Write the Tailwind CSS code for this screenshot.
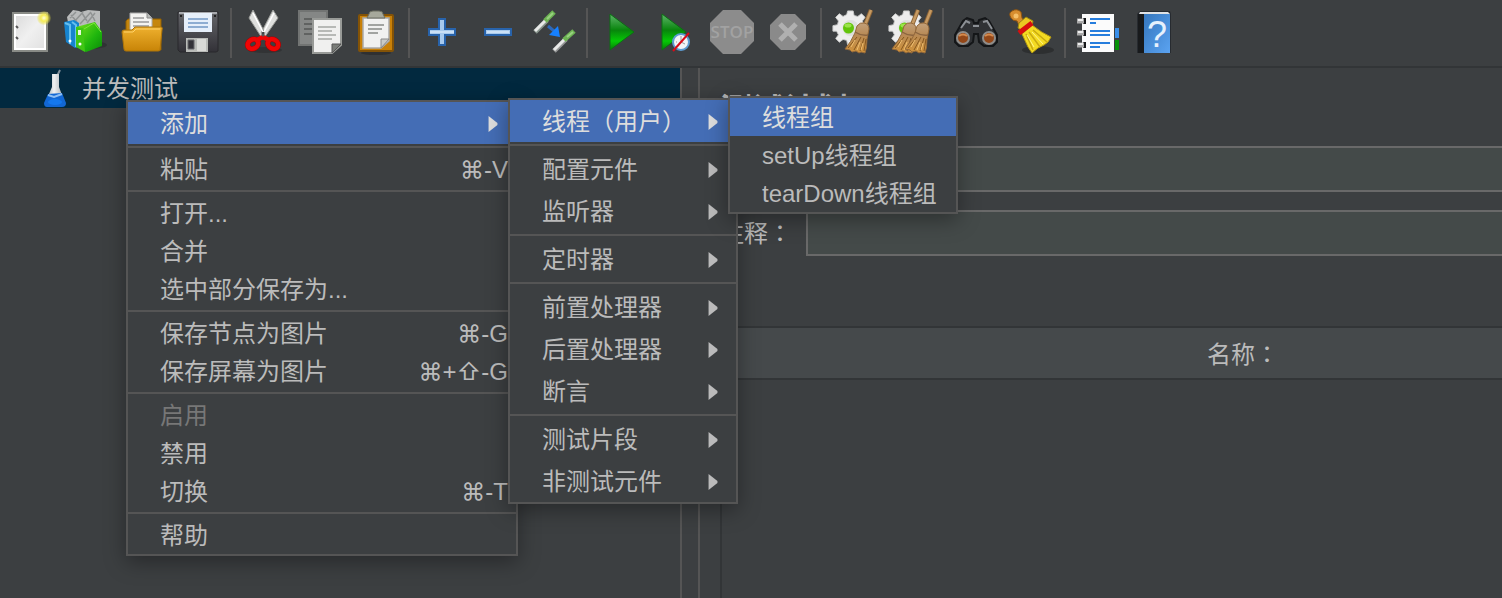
<!DOCTYPE html>
<html lang="zh-CN">
<head>
<meta charset="utf-8">
<meta name="viewport" content="width=device-width, initial-scale=1">
<title>并发测试</title>
<script src="https://cdn.jsdelivr.net/npm/@tailwindcss/browser@4"></script>
</head>
<body class="relative flex h-screen flex-col overflow-hidden bg-[#3c3f41] font-['Liberation_Sans','Noto_Sans_CJK_SC',sans-serif] text-2xl text-[#bbbbbb]">

<svg width="0" height="0" class="absolute" aria-hidden="true">
  <defs>
    <linearGradient id="paper" x1="0" y1="0" x2="1" y2="1"><stop offset="0" stop-color="#dcdcdc"/><stop offset=".5" stop-color="#f0f0f0"/><stop offset="1" stop-color="#e2e2e2"/></linearGradient>
    <linearGradient id="play" x1="0" y1="0" x2="0" y2="1"><stop offset="0" stop-color="#5fb56b"/><stop offset=".45" stop-color="#08850c"/><stop offset=".75" stop-color="#05c905"/><stop offset="1" stop-color="#087a08"/></linearGradient>
    <linearGradient id="green" x1="0" y1="0" x2="1" y2="1"><stop offset="0" stop-color="#7be21d"/><stop offset=".6" stop-color="#1fb60d"/><stop offset="1" stop-color="#0a8a08"/></linearGradient>
    <linearGradient id="folder" x1="0" y1="0" x2="0" y2="1"><stop offset="0" stop-color="#eeb02e"/><stop offset="1" stop-color="#c88407"/></linearGradient>
    <linearGradient id="disk" x1="0" y1="0" x2="0" y2="1"><stop offset="0" stop-color="#65666a"/><stop offset="1" stop-color="#323137"/></linearGradient>
    <linearGradient id="straw" x1="0" y1="0" x2="0" y2="1"><stop offset="0" stop-color="#c2a07a"/><stop offset=".4" stop-color="#b88a55"/><stop offset="1" stop-color="#d0923a"/></linearGradient>
    <linearGradient id="book" x1="0" y1="0" x2="1" y2="1"><stop offset="0" stop-color="#3577be"/><stop offset="1" stop-color="#5ba3f1"/></linearGradient>
    <linearGradient id="glass" x1="0" y1="0" x2="1" y2="0"><stop offset="0" stop-color="#8d9aa4"/><stop offset=".45" stop-color="#f0f1f2"/><stop offset="1" stop-color="#9aa3aa"/></linearGradient>
    <radialGradient id="glow"><stop offset="0" stop-color="#fffde0"/><stop offset=".45" stop-color="#f5ec55"/><stop offset="1" stop-color="#e8df3c" stop-opacity=".15"/></radialGradient>
    <g id="gear"><path d="M17 1h6l1 5 4 1 4-3 4 4-3 4 2 4h4v6l-5 1-1 4 3 4-4 4-4-3-4 2-1 4h-6l-1-5-4-1-4 3-4-4 3-4-2-4H1v-6l5-1 1-4-3-4 4-4 4 3 4-2z" transform="scale(.92)" fill="#ededed" stroke="#c9cac8"/><circle cx="18.500" cy="18" r="8" fill="#dedfdd"/><circle cx="16.500" cy="18" r="5.500" fill="#62c40a"/><ellipse cx="16" cy="15.500" rx="3.500" ry="2" fill="#9be34a"/></g>
    <g id="besom"><path d="M28 1 22 16" stroke="#8a6336" stroke-width="4.500"/><path d="M28 1 22 16" stroke="#c69a62" stroke-width="2.500"/><path d="M14 17q3-4 7-3 5 1 5 6l-2 10q0 9-2 14l-4-1-2 1-3-2-4 1-2-2-5-1Q8 33 12 24z" fill="url(#straw)" stroke="#94693a"/><path d="M12 23q6 4 13 3" fill="none" stroke="#8b6540" stroke-width="1.500"/><path d="M14 28 5 39M18 28l-7 13M21 29l-4 13M23 30l-2 12" fill="none" stroke="#85571f"/><path d="M12 31 8 38M17 33l-3 8M20 34l-2 7" stroke="#f0bf70"/></g>
    <symbol id="arrow" viewBox="0 0 10 18"><path d="M0 0 10 8v2L0 18z" fill="currentColor"/></symbol>
  </defs>
</svg>

<header role="toolbar" aria-label="工具栏" class="flex h-[68px] shrink-0 items-center border-b-2 border-[#323537] pl-0.5 *:[button]:flex *:[button]:w-14 *:[button]:shrink-0 *:[button]:justify-center *:[hr]:mx-1 *:[hr]:h-[50px] *:[hr]:w-0.5 *:[hr]:shrink-0 *:[hr]:border-0 *:[hr]:bg-[#555555]">
  <button aria-label="新建"><svg class="size-12" viewBox="0 0 48 48"><rect x="7" y="4" width="34" height="38" fill="#fff" stroke="#898b86" stroke-width="2"/><rect x="10" y="7" width="28" height="32" fill="url(#paper)"/><path d="M10 17l2 2M10 28l2 2" stroke="#555" stroke-width="2"/><circle cx="38" cy="9" r="7" fill="url(#glow)"/></svg></button>
  <button aria-label="模板"><svg class="size-12" viewBox="0 0 48 48"><ellipse cx="28" cy="36" rx="17" ry="4" fill="#000" opacity=".2"/><path d="M5 8 11 1l6 1 2 1 7-2 12 1v22H8z" fill="#b9bbbb"/><path d="M8 9l6-6M12 13 21 3M18 15 29 3M25 14l8-10M9 6l6 7M20 4l5 8M29 4l4 8" stroke="#909393" stroke-width="1.500"/><path d="M2 13l10-2 5 3v24l-4 1-9-6z" fill="#1684cf"/><path d="M3 14l5 2v19M10 13l4 3v22" stroke="#65bfef" stroke-width="2" fill="none"/><circle cx="8" cy="32" r="1.500" fill="#fff"/><path d="M14 18 33 13l7 10v14L24 43l-9-5z" fill="url(#green)"/><path d="M14 18l7 1 2 24-9-5z" fill="#3fc714"/><path d="M16 21h3v5h-3z" fill="#e9f8da"/><circle cx="18" cy="35" r="1.500" fill="#fff"/><path d="M22 20 32 14l7 9" fill="none" stroke="#7ce838"/></svg></button>
  <button aria-label="打开"><svg class="size-12" viewBox="0 0 48 48"><path d="M8 12 10 10h33v31H8z" fill="#c5860d" stroke="#936000"/><path d="M12 4h17l5 5v17H12z" fill="#f3f3f1" stroke="#aaa"/><path d="M29 4v5h5" fill="#b7bab7" stroke="#888"/><path d="M15 9h11M15 13h16M15 17h16M15 20h16" stroke="#999" stroke-width="1.500"/><path d="M4 23q0-2 2-2h8l3-3h26q2 0 1 3l-2 20q0 1-2 1H8q-2 0-2-2z" fill="url(#folder)" stroke="#ad7408"/><path d="M6 23h9l3-3h24" stroke="#ffd36b" fill="none"/></svg></button>
  <button aria-label="保存"><svg class="size-12" viewBox="0 0 48 48"><path d="M4 3h40v39l-2 1H6l-2-2z" fill="url(#disk)" stroke="#29292c"/><path d="M5 4h38" stroke="#a8aaae" stroke-width="2"/><path d="M10 4h28v19H10z" fill="#e6effa"/><path d="M14 10h20M14 14h20M14 18h20" stroke="#8eadd2" stroke-width="2"/><path d="M12 29h22v14H12z" fill="#b9bbb8"/><path d="M14 31h6v9h-6z" fill="#333238" stroke="#66676a"/><path d="M23 30h9v12h-9z" fill="#d9dad7"/><path d="M6 6h2v2H6zM40 6h2v2h-2z" fill="#222"/></svg></button>
  <hr>
  <button aria-label="剪切"><svg class="size-12" viewBox="0 0 48 48"><ellipse cx="25" cy="41" rx="17" ry="3" fill="#222" opacity=".4"/><path d="M13 1 25 24l-3 5L9 9zM33 1 21 24l3 5L38 9z" fill="#dedfdd" stroke="#9a9c98"/><path d="M13 4l10 19M34 4 24 23" stroke="#fff" stroke-width="1.500"/><g fill="none" stroke="#a80000" stroke-width="5.500"><ellipse cx="13" cy="35" rx="5.500" ry="4.500" transform="rotate(-30 13 35)"/><ellipse cx="33" cy="35" rx="5.500" ry="4.500" transform="rotate(30 33 35)"/></g><g fill="none" stroke="#ef0505" stroke-width="4.500"><ellipse cx="13" cy="35" rx="5.500" ry="4.500" transform="rotate(-30 13 35)"/><ellipse cx="33" cy="35" rx="5.500" ry="4.500" transform="rotate(30 33 35)"/><path d="M17 31l6-3 6 3"/></g><circle cx="23" cy="26" r="1.500" fill="#555"/></svg></button>
  <button aria-label="复制"><svg class="size-12" viewBox="0 0 48 48"><path d="M3 2h28v34H3z" fill="#858786" stroke="#727473" stroke-width="2"/><path d="M8 10h16M8 15h16M8 20h16M8 25h12" stroke="#606261" stroke-width="2"/><path d="M17 10h28v26l-9 8H17z" fill="#f0f0ef" stroke="#989a97" stroke-width="2"/><path d="M22 18h18M22 22h14M22 26h18M22 30h14" stroke="#a4a6a4" stroke-width="1.500"/><path d="M45 35h-9v9z" fill="#7a7d79" stroke="#555"/></svg></button>
  <button aria-label="粘贴"><svg class="size-12" viewBox="0 0 48 48"><ellipse cx="24" cy="44" rx="15" ry="2" fill="#222" opacity=".5"/><rect x="7" y="6" width="34" height="36" rx="1" fill="#c88008" stroke="#845306" stroke-width="2"/><path d="M11 9h26v23l-8 7H11z" fill="#f1f1f0" stroke="#aaa" stroke-width="1.500"/><path d="M17 5q0-3 4-3h6q4 0 4 3l2 4H15z" fill="#a6a89b" stroke="#6b6d60"/><path d="M16 16h16M16 20h14M16 24h10" stroke="#a2a4a1" stroke-width="2"/><path d="M37 30h-8v9z" fill="#c9cac7" stroke="#888"/></svg></button>
  <hr>
  <button aria-label="全部展开"><svg class="size-12" viewBox="0 0 48 48"><path d="M21 10h6v10h10v6H27v10h-6V26H11v-6h10z" fill="#a8caed" stroke="#2863ab" stroke-width="2"/><path d="M12 23h24" stroke="#cae0f6" stroke-width="2"/></svg></button>
  <button aria-label="全部收起"><svg class="size-12" viewBox="0 0 48 48"><path d="M11 20h26v6H11z" fill="#a8caed" stroke="#2863ab" stroke-width="2"/><path d="M13 23h22" stroke="#cae0f6" stroke-width="2"/></svg></button>
  <button aria-label="切换状态"><svg class="size-12" viewBox="0 0 48 48"><path d="M5 23 17 11" stroke="#87948b" stroke-width="5"/><path d="M5 22 16 11" stroke="#e8e9e8" stroke-width="3"/><path d="m15 12 9-9" stroke="#6db353" stroke-width="5"/><path d="m17 10 6-6" stroke="#98d180" stroke-width="2"/><path d="M24 42 36 30" stroke="#949696" stroke-width="5"/><path d="M24 41 35 30" stroke="#e8e9e8" stroke-width="3"/><path d="m34 31 10-9" stroke="#6db353" stroke-width="5"/><path d="m37 28 6-5" stroke="#98d180" stroke-width="2"/><path d="m18 17 6 5" stroke="#2e68b8" stroke-width="3"/><path d="m28 17 2 11-11-2z" fill="#1680ff"/></svg></button>
  <hr>
  <button aria-label="启动"><svg class="size-12" viewBox="0 0 48 48"><path d="M14 5 38 23 14 41z" fill="url(#play)" stroke="#0b7012"/></svg></button>
  <button aria-label="不停顿开始"><svg class="size-12" viewBox="0 0 48 48"><path d="M10 5 34 23 10 41z" fill="url(#play)" stroke="#0b7012"/><circle cx="29" cy="33" r="8" fill="#f2f4f6" stroke="#5c9bd0" stroke-width="2"/><path d="M29 27v6l4 2M24 33h1" stroke="#999" fill="none"/><path d="M21 42 37 24" stroke="#d90b19" stroke-width="2"/></svg></button>
  <button aria-label="停止" disabled><svg class="size-12" viewBox="0 0 48 48"><path d="M15 1h18l13 13v18L33 45H15L2 32V14z" fill="#8c8c8c"/><text x="24" y="29" text-anchor="middle" font-family="Liberation Sans Narrow, Open Sans, sans-serif" font-size="17" font-weight="600" fill="#a2a2a2">STOP</text></svg></button>
  <button aria-label="关闭" disabled><svg class="size-12" viewBox="0 0 48 48"><path d="M17 5h14l11 11v14L31 41H17L6 30V16z" fill="#8a8a8a"/><path d="m16 15 16 16M32 15 16 31" stroke="#b0b0b0" stroke-width="5"/></svg></button>
  <hr>
  <button aria-label="清除"><svg class="size-12" viewBox="0 0 48 48"><use href="#gear" x="2" y="1"/><use href="#besom" x="13"/></svg></button>
  <button aria-label="清除全部"><svg class="size-12" viewBox="0 0 48 48"><use href="#gear" x="2" y="1"/><use href="#besom" x="4"/><use href="#besom" x="17"/></svg></button>
  <hr>
  <button aria-label="查找"><svg class="size-12" viewBox="0 0 48 48"><path d="M3 26 11 12l4-3 6 2 1 3h4l1-3 6-2 4 3 8 14v7l-4 4h-9l-5-4-1-8h-4l-1 8-5 4H7l-4-4z" fill="#303235" stroke="#141618" stroke-width="2"/><path d="m9 19 5-7 4 2M31 13l4-1 5 8M21 17h6" stroke="#8c9095" stroke-width="2" fill="none"/><g fill="#934718" stroke="#8f8d8a" stroke-width="2"><circle cx="11" cy="29" r="6"/><circle cx="37" cy="29" r="6"/></g><path d="M7 27q4-3 8 0M33 27q4-3 8 0" stroke="#d58a4d" stroke-width="2" fill="none"/></svg></button>
  <button aria-label="清除查找"><svg class="size-12" viewBox="0 0 48 48"><ellipse cx="30" cy="41" rx="16" ry="4" fill="#111" opacity=".35"/><path d="M3 9Q0 4 4 2q5-3 9 1l1 6 3 5-5 4-3-6q-4 0-6-3z" fill="#d78d2f" stroke="#8e5511"/><circle cx="8" cy="7" r="2.500" fill="#f5bf68"/><path d="m10 19 1-5 7-6 7 4-1 5-8 6z" fill="#eac822" stroke="#9c8510"/><path d="m14 25 10-9q10 8 19 12l-3 5-4 3-6 3-6 5-4-6z" fill="#f4db22" stroke="#b59912"/><path d="m18 25 7 16M21 23l11 15M25 21l14 12" stroke="#c9aa12" stroke-width="1.500"/><path d="m19 26 7 12M24 23l11 12" stroke="#fff58c"/><path d="m11 24 13-10" stroke="#d70e0e" stroke-width="5"/></svg></button>
  <hr>
  <button aria-label="函数助手"><svg class="size-12" viewBox="0 0 48 48"><path d="M41 19h4v10h-4z" fill="#398fea"/><path d="M41 31h4v10h-4z" fill="#079307"/><path d="M8 5h32v38H8z" fill="#fbfbfb"/><path d="M16 10h20M16 22h20M16 26h20M16 34h20" stroke="#267ddd" stroke-width="2"/><path d="M16 14h6M16 38h10" stroke="#267ddd" stroke-width="2"/><g fill="#17191a"><path d="M9 9h3v6H9zM9 21h3v6H9zM9 33h3v6H9z"/></g><path d="M3 12h7M3 24h7M3 36h7" stroke="#aaa" stroke-width="5"/><path d="M4 11h5M4 23h5M4 35h5" stroke="#eee" stroke-width="2"/></svg></button>
  <button aria-label="帮助"><svg class="size-12" viewBox="0 0 48 48"><path d="M7 5 10 2h30l1 3v39H7z" fill="#272b30"/><path d="M10 3h28l2 2H9z" fill="#dfe2e5"/><path d="M8 5h6v39H8z" fill="#181a1c"/><path d="M14 5h26v39H14z" fill="url(#book)"/><text x="27" y="38" text-anchor="middle" font-family="Liberation Sans, sans-serif" font-size="36" fill="#e6f1fd">?</text></svg></button>
</header>

<div class="flex min-h-0 flex-1">
  <nav aria-label="测试树" class="w-[682px] shrink-0 border-r-2 border-[#555555]">
    <div role="tree">
      <div role="treeitem" aria-selected="true" class="flex h-10 items-center bg-[#02293f] pl-[43px]">
        <svg class="h-10 w-6" viewBox="0 0 24 40"><path d="m17 2-3 6" stroke="#81909b" stroke-width="2"/><path d="M9 6h7v13l6 16q0 3-3 3H5q-3 0-3-3l7-16z" fill="url(#glass)"/><path d="m5 26 14-1 4 10q0 4-4 4H4q-3 0-3-4z" fill="#1267d4"/><path d="m5 27 6 2 8-3" fill="none" stroke="#8fbff4" stroke-width="2"/><ellipse cx="12" cy="34" rx="7" ry="3" fill="#1478ee"/></svg>
        <span class="pt-0.5 pl-[15px]">并发测试</span>
      </div>
    </div>
  </nav>
  <main class="ml-4 flex min-w-0 flex-1 flex-col border-l-2 border-[#555555] pt-[22px] pl-5">
    <h1 class="text-[32px] leading-10 font-bold">测试计划</h1>
    <form class="mt-4 flex flex-col gap-[18px]">
      <div class="flex items-center">
        <label for="name" class="w-[86px] shrink-0">名称<span class="font-['Noto_Sans_CJK_TC']" lang="zh-TW">：</span></label>
        <input id="name" type="text" class="h-[46px] min-w-0 flex-1 border-2 border-r-0 border-[#696969] bg-[#444a49] px-2">
      </div>
      <div class="flex items-center">
        <label for="comment" class="w-[86px] shrink-0">注释<span class="font-['Noto_Sans_CJK_TC']" lang="zh-TW">：</span></label>
        <input id="comment" type="text" class="h-[46px] min-w-0 flex-1 border-2 border-r-0 border-[#696969] bg-[#444a49] px-2">
      </div>
    </form>
    <div class="mt-[70px] flex-1 border-l-2 border-[#323537]">
      <table class="w-full border-separate border-spacing-0">
        <thead><tr><th scope="col" class="h-[54px] border-y-2 border-[#323537] bg-[#45494b] pt-0.5 pl-[262px] text-center font-normal">名称<span class="font-['Noto_Sans_CJK_TC']" lang="zh-TW">：</span></th></tr></thead>
      </table>
    </div>
  </main>
</div>

<div role="menu" aria-label="节点菜单" class="absolute top-[100px] left-[126px] w-[392px] border-2 border-[#555555] bg-[#3c3f41] shadow-[0_6px_20px_rgba(0,0,0,0.35)] *:[button]:flex *:[button]:h-[38px] *:[button]:w-full *:[button]:items-center *:[button]:justify-between *:[button]:pt-0.5 *:[button]:pr-2 *:[button]:pl-8 *:[hr]:my-0.5 *:[hr]:h-0.5 *:[hr]:border-0 *:[hr]:bg-[#555555]">
  <div role="none"><button role="menuitem" class="flex h-[42px] w-full items-center justify-between bg-[#446db5] pt-0.5 pr-[18px] pl-8 text-[#dddddd]">添加<svg class="h-4 w-2.5"><use href="#arrow"/></svg></button></div>
  <hr>
  <button role="menuitem">粘贴<kbd class="font-['Liberation_Sans','Inter']">⌘-V</kbd></button>
  <hr>
  <button role="menuitem">打开...</button>
  <button role="menuitem">合并</button>
  <button role="menuitem">选中部分保存为...</button>
  <hr>
  <button role="menuitem">保存节点为图片<kbd class="font-['Liberation_Sans','Inter']">⌘-G</kbd></button>
  <button role="menuitem">保存屏幕为图片<kbd class="font-['Liberation_Sans','Inter']">⌘+⇧-G</kbd></button>
  <hr>
  <button role="menuitem" disabled class="text-[#777777]">启用</button>
  <button role="menuitem">禁用</button>
  <button role="menuitem">切换<kbd class="font-['Liberation_Sans','Inter']">⌘-T</kbd></button>
  <hr>
  <button role="menuitem">帮助</button>
</div>

<div role="menu" aria-label="添加" class="absolute top-[98px] left-[508px] w-[230px] border-2 border-[#555555] bg-[#3c3f41] shadow-[0_6px_20px_rgba(0,0,0,0.35)] *:[button]:flex *:[button]:h-[42px] *:[button]:w-full *:[button]:items-center *:[button]:justify-between *:[button]:pt-0.5 *:[button]:pr-[18px] *:[button]:pl-8 *:[hr]:my-0.5 *:[hr]:h-0.5 *:[hr]:border-0 *:[hr]:bg-[#555555]">
  <button role="menuitem" class="bg-[#446db5] text-[#dddddd]"><span class="whitespace-nowrap">线程（用户）</span><svg class="h-4 w-2.5 shrink-0"><use href="#arrow"/></svg></button>
  <hr>
  <button role="menuitem">配置元件<svg class="h-4 w-2.5"><use href="#arrow"/></svg></button>
  <button role="menuitem">监听器<svg class="h-4 w-2.5"><use href="#arrow"/></svg></button>
  <hr>
  <button role="menuitem">定时器<svg class="h-4 w-2.5"><use href="#arrow"/></svg></button>
  <hr>
  <button role="menuitem">前置处理器<svg class="h-4 w-2.5"><use href="#arrow"/></svg></button>
  <button role="menuitem">后置处理器<svg class="h-4 w-2.5"><use href="#arrow"/></svg></button>
  <button role="menuitem">断言<svg class="h-4 w-2.5"><use href="#arrow"/></svg></button>
  <hr>
  <button role="menuitem">测试片段<svg class="h-4 w-2.5"><use href="#arrow"/></svg></button>
  <button role="menuitem">非测试元件<svg class="h-4 w-2.5"><use href="#arrow"/></svg></button>
</div>

<div role="menu" aria-label="线程（用户）" class="absolute top-24 left-[728px] w-[230px] border-2 border-[#555555] bg-[#3c3f41] shadow-[0_6px_20px_rgba(0,0,0,0.35)] *:[button]:flex *:[button]:h-[38px] *:[button]:w-full *:[button]:items-center *:[button]:pt-0.5 *:[button]:pl-8 *:[button]:whitespace-nowrap">
  <button role="menuitem" class="bg-[#446db5] text-[#dddddd]">线程组</button>
  <button role="menuitem">setUp线程组</button>
  <button role="menuitem">tearDown线程组</button>
</div>
</body>
</html>
